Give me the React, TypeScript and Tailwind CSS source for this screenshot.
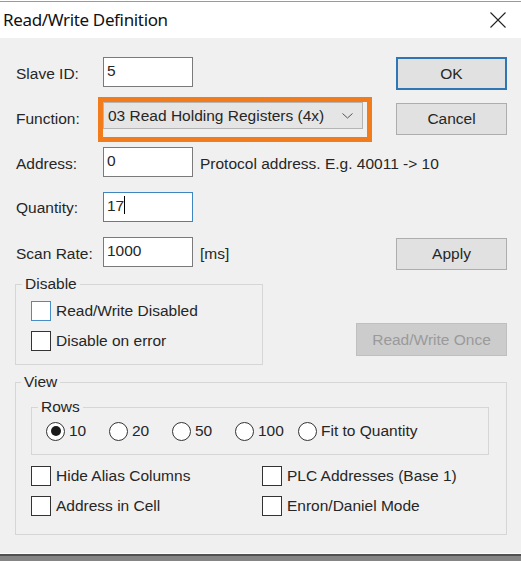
import React from "react";

function Checkbox({ label, hover = false }: { label: string; hover?: boolean }) {
  return (
    <div className="flex items-center h-[30px]">
      <div
        className={
          hover
            ? "w-[20px] h-[20px] border border-[#4a8cc4] bg-white shrink-0"
            : "w-[20px] h-[20px] border border-[#333333] bg-white shrink-0"
        }
      />
      <span className="ml-[5px] whitespace-nowrap">{label}</span>
    </div>
  );
}

function Radio({ label, checked = false }: { label: string; checked?: boolean }) {
  return (
    <div className="flex items-center w-[63px] h-[30px] shrink-0">
      <div className="w-[19px] h-[19px] rounded-full border border-[#333333] bg-white flex items-center justify-center shrink-0">
        {checked && <div className="w-[10px] h-[10px] rounded-full bg-[#1a1a1a]" />}
      </div>
      <span className="ml-[4px] whitespace-nowrap">{label}</span>
    </div>
  );
}

function Input({ value, focused = false, caret = false }: { value: string; focused?: boolean; caret?: boolean }) {
  return (
    <div
      className={
        focused
          ? "w-[90px] h-[30px] border border-[#3f86c0] bg-white pl-[3px] pt-[4px] flex items-start shrink-0"
          : "w-[90px] h-[30px] border border-[#7a7a7a] bg-white pl-[3px] pt-[4px] flex items-start shrink-0"
      }
    >
      <span>{value}</span>
      {caret && <span className="inline-block w-[1px] h-[18px] bg-black -mt-[1px]" />}
    </div>
  );
}

function Button({ label, primary = false, className = "" }: { label: string; primary?: boolean; className?: string }) {
  return (
    <div
      className={
        (primary
          ? "border-2 border-[#2f76b5] "
          : "border border-[#adadad] ") +
        "w-[111px] bg-[#e1e1e1] flex items-center justify-center shrink-0 " +
        className
      }
    >
      {label}
    </div>
  );
}

export default function App() {
  return (
    <div className="w-[521px] h-[561px] bg-[#f0f0f0] flex flex-col overflow-hidden text-[15.5px] leading-[18px] text-[#262626] font-['Liberation_Sans',Arial,sans-serif]">
      <div className="h-[1px] bg-white shrink-0" />
      <div className="h-[1px] bg-[#9a9a9a] shrink-0" />
      {/* Title bar */}
      <div className="h-[36px] bg-white flex items-center pl-[3px] pr-[15px] shrink-0">
        <span className="text-[17px] tracking-[-0.35px] font-['Noto_Sans','Open_Sans',sans-serif] text-[#111111]">
          Read/Write Definition
        </span>
        <svg className="ml-auto" width="16" height="16" viewBox="0 0 16 16">
          <path d="M0.5 0.5 L15.5 15.5 M15.5 0.5 L0.5 15.5" stroke="#222" strokeWidth="1.1" fill="none" />
        </svg>
      </div>

      {/* Body */}
      <div className="flex-1 flex flex-col pl-[15px] pr-[14px]">
        {/* Slave ID */}
        <div className="mt-[19px] h-[33px] flex items-start">
          <span className="w-[88px] pl-[1px] mt-[8px] shrink-0">Slave ID:</span>
          <Input value="5" />
          <Button label="OK" primary className="ml-auto h-[33px]" />
        </div>

        {/* Function */}
        <div className="mt-[7px] h-[45px] flex items-start">
          <span className="w-[83px] pl-[1px] mt-[13px] shrink-0">Function:</span>
          <div className="w-[274px] h-[45px] border-[5px] border-[#f27b1c] shrink-0">
            <div className="w-[260px] h-[27px] bg-[#e5e5e5] border border-[#b5b5b5] flex items-center pl-[4px] pr-[9px]">
              <span className="whitespace-nowrap">03 Read Holding Registers (4x)</span>
              <svg className="ml-auto" width="11" height="6" viewBox="0 0 11 6">
                <path d="M0.5 0.5 L5.5 5 L10.5 0.5" stroke="#555" strokeWidth="1" fill="none" />
              </svg>
            </div>
          </div>
          <Button label="Cancel" className="ml-auto mt-[6px] h-[32px]" />
        </div>

        {/* Address */}
        <div className="mt-[5px] h-[30px] flex items-start">
          <span className="w-[88px] pl-[1px] mt-[8px] shrink-0">Address:</span>
          <Input value="0" />
          <span className="ml-[7px] mt-[8px] whitespace-nowrap">{"Protocol address. E.g. 40011 -> 10"}</span>
        </div>

        {/* Quantity */}
        <div className="mt-[15px] h-[30px] flex items-start">
          <span className="w-[88px] pl-[1px] mt-[7px] shrink-0">Quantity:</span>
          <Input value="17" focused caret />
        </div>

        {/* Scan rate */}
        <div className="mt-[15px] h-[33px] flex items-start">
          <span className="w-[88px] pl-[1px] mt-[8px] shrink-0">Scan Rate:</span>
          <Input value="1000" />
          <span className="ml-[7px] mt-[8px]">[ms]</span>
          <Button label="Apply" className="ml-auto mt-[1px] h-[32px]" />
        </div>

        {/* Disable group + Read/Write Once */}
        <div className="mt-[5px] flex items-start">
          <fieldset className="w-[248px] border border-[#d6d6d6] pl-[15px] pt-[3px] pb-[8px] shrink-0">
            <legend className="-ml-[9px] px-[3px] leading-[18px]">Disable</legend>
            <Checkbox label="Read/Write Disabled" hover />
            <Checkbox label="Disable on error" />
          </fieldset>
          <div className="ml-auto mt-[48px] w-[151px] h-[33px] bg-[#cccccc] border border-[#bfbfbf] text-[#9a9a9a] flex items-center justify-center shrink-0">
            Read/Write Once
          </div>
        </div>

        {/* View group */}
        <fieldset className="mt-[8px] border border-[#d6d6d6] pl-[15px] pr-[17px] pt-[7px] pb-[13px]">
          <legend className="-ml-[10px] px-[3px] leading-[18px]">View</legend>
          <fieldset className="border border-[#d6d6d6] pl-[14px] pb-[8px]">
            <legend className="-ml-[8px] px-[3px] leading-[18px]">Rows</legend>
            <div className="flex items-center">
              <Radio label="10" checked />
              <Radio label="20" />
              <Radio label="50" />
              <Radio label="100" />
              <Radio label="Fit to Quantity" />
            </div>
          </fieldset>
          <div className="mt-[6px] grid grid-cols-[231px_1fr]">
            <Checkbox label="Hide Alias Columns" />
            <Checkbox label="PLC Addresses (Base 1)" />
            <Checkbox label="Address in Cell" />
            <Checkbox label="Enron/Daniel Mode" />
          </div>
        </fieldset>
      </div>

      {/* bottom edge */}
      <div className="h-[1px] bg-[#fbfbfb] shrink-0" />
      <div className="h-[2px] bg-[#505050] shrink-0" />
      <div className="h-[5px] bg-[#858585] shrink-0" />
    </div>
  );
}
